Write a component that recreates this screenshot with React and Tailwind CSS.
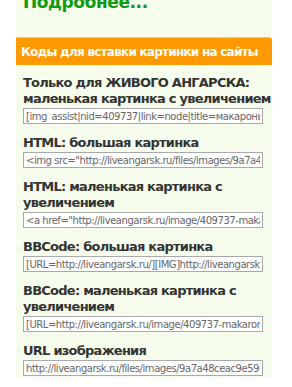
const rows = [
  {
    title: 'Только для ЖИВОГО АНГАРСКА: маленькая картинка с увеличением',
    value: '[img_assist|nid=409737|link=node|title=макароны и сыр|desc=|align=left|width=100|height=75]',
  },
  {
    title: 'HTML: большая картинка',
    value: '<img src="http://liveangarsk.ru/files/images/9a7a48ceac9e596.jpg" />',
  },
  {
    title: 'HTML: маленькая картинка с увеличением',
    value: '<a href="http://liveangarsk.ru/image/409737-makarony-i-syr">',
  },
  {
    title: 'BBCode: большая картинка',
    value: '[URL=http://liveangarsk.ru/][IMG]http://liveangarsk.ru/files/images/9a7a48.jpg[/IMG][/URL]',
  },
  {
    title: 'BBCode: маленькая картинка с увеличением',
    value: '[URL=http://liveangarsk.ru/image/409737-makarony-i-syr]',
  },
  {
    title: 'URL изображения',
    value: 'http://liveangarsk.ru/files/images/9a7a48ceac9e596.jpg',
  },
];

export default function App() {
  return (
    <div className="w-[292px] h-[387px] overflow-hidden bg-white font-['DejaVu_Sans',Verdana,sans-serif]">
      <div className="ml-[16px] w-[256px] bg-[#f6fded] h-full">
        {/* More link */}
        <div className="-mt-[9px] pl-[7px] text-[17px] leading-[22px] font-bold text-[#119911] tracking-[-0.4px]">
          Подробнее...
        </div>

        {/* Orange header */}
        <div className="mt-[24px] h-[28px] bg-[#ff9900] rounded-tr-[3px] border-t border-[#ffc46b] flex items-center pl-[5px]">
          <span className="text-[12px] font-bold text-white tracking-[-0.75px] whitespace-nowrap">
            Коды для вставки картинки на сайты
          </span>
        </div>

        {/* Code rows */}
        <div className="pl-[7px] pt-[10px] flex flex-col gap-[11px]">
          {rows.map((row, i) => (
            <div key={i}>
              <div className="text-[13px] leading-[16px] font-bold text-[#333333] tracking-[-0.75px]">
                {row.title}
              </div>
              <input
                readOnly
                value={row.value}
                className="mt-[1px] block w-[240px] h-[16px] border border-[#a9a9a9] bg-white px-[2px] text-[10px] tracking-[-0.45px] text-[#666666] font-['DejaVu_Sans',Verdana,sans-serif] outline-none"
              />
            </div>
          ))}
        </div>
      </div>
    </div>
  );
}
